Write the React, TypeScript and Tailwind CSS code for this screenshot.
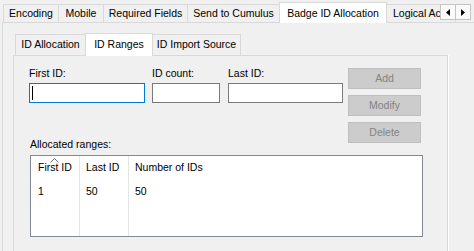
import type { ReactNode } from 'react';

// Windows-forms style "Badge ID Allocation" page, nested tab controls.

const outerTabs = [
  { label: 'Encoding', w: 'w-[56px]' },
  { label: 'Mobile', w: 'w-[46px]' },
  { label: 'Required Fields', w: 'w-[85px]' },
  { label: 'Send to Cumulus', w: 'w-[93px]' },
];

function Tab({ children, className }: { children: ReactNode; className: string }) {
  return (
    <div
      className={`-ml-px flex shrink-0 items-center justify-center whitespace-nowrap border border-b-0 border-[#d9d9d9] bg-[#f0f0f0] first:ml-0 ${className}`}
    >
      {children}
    </div>
  );
}

function SelectedTab({ children, className }: { children: ReactNode; className: string }) {
  return (
    <div
      className={`relative z-10 -mb-px -ml-px flex shrink-0 items-start justify-center whitespace-nowrap border border-b-0 border-[#d9d9d9] bg-white pt-[3px] ${className}`}
    >
      {children}
    </div>
  );
}

function Field({ label, width, focused }: { label: string; width: string; focused?: boolean }) {
  return (
    <div className={`flex shrink-0 flex-col ${width}`}>
      <div className="h-[14px] leading-[14px]">{label}</div>
      <div
        className={`mt-[3px] flex h-[20px] items-center bg-white pl-[2px] ${
          focused ? 'border border-[#0078d7]' : 'border border-[#7a7a7a]'
        }`}
      >
        {focused && <span className="h-[14px] w-px bg-black" />}
      </div>
    </div>
  );
}

function DisabledButton({ label }: { label: string }) {
  return (
    <div className="flex h-[21px] items-center justify-center border border-[#bfbfbf] bg-[#cccccc] text-[#838383]">
      {label}
    </div>
  );
}

export default function App() {
  return (
    <div
      className="relative h-[251px] w-[474px] overflow-hidden bg-[#f0f0f0] text-[10.5px] text-black"
      style={{ fontFamily: '"Liberation Sans", Arial, sans-serif' }}
    >
      {/* outer tab strip */}
      <div className="flex h-[22px] items-end pl-[3px]">
        {outerTabs.map((t) => (
          <Tab key={t.label} className={`h-[18px] ${t.w}`}>
            {t.label}
          </Tab>
        ))}
        <SelectedTab className="h-[21px] w-[108px]">Badge ID Allocation</SelectedTab>
        <Tab className="h-[18px] w-[70px] !justify-start pl-[6px]">Logical Access</Tab>
      </div>

      {/* tab scroll arrows */}
      <div className="absolute left-[440px] top-[4px] flex">
        <div className="flex h-[16px] w-[16px] items-center justify-center border border-[#c4c4c4] bg-[#fafafa]">
          <svg width="4" height="7" viewBox="0 0 4 7">
            <path d="M4 0 L0 3.5 L4 7 Z" fill="#000" />
          </svg>
        </div>
        <div className="-ml-px flex h-[16px] w-[16px] items-center justify-center border border-[#c4c4c4] bg-[#fafafa]">
          <svg width="4" height="7" viewBox="0 0 4 7">
            <path d="M0 0 L4 3.5 L0 7 Z" fill="#000" />
          </svg>
        </div>
      </div>

      {/* outer page */}
      <div className="ml-[2px] h-[240px] w-[490px] border-l border-t border-[#d9d9d9] pl-[10px] pt-[10px]">
        {/* inner tab strip */}
        <div className="flex h-[22px] items-end pl-[2px]">
          <Tab className="h-[21px] w-[71px]">ID Allocation</Tab>
          <SelectedTab className="h-[23px] w-[68px]">ID Ranges</SelectedTab>
          <Tab className="h-[21px] w-[89px]">ID Import Source</Tab>
        </div>

        {/* inner page */}
        <div className="h-[220px] w-[435px] border-l border-r border-t border-[#d9d9d9] pl-[15px] pt-[10px] shadow-[1px_0_0_#ffffff]">
          <div className="flex items-start">
            <div className="flex flex-col">
              <div className="flex items-start">
                <Field label="First ID:" width="w-[116px]" focused />
                <div className="ml-[7px]">
                  <Field label="ID count:" width="w-[68px]" />
                </div>
                <div className="ml-[8px]">
                  <Field label="Last ID:" width="w-[115px]" />
                </div>
              </div>
              <div className="mt-[34px] h-[14px] pl-px leading-[14px]">Allocated ranges:</div>
            </div>
            <div className="ml-[5px] flex w-[73px] flex-col gap-[6px] pt-[2px]">
              <DisabledButton label="Add" />
              <DisabledButton label="Modify" />
              <DisabledButton label="Delete" />
            </div>
          </div>

          {/* allocated ranges list */}
          <div className="ml-px mt-[4px] flex h-[82px] w-[393px] border border-[#828790] bg-white">
            <div className="relative w-[49px] border-r border-[#e5e5e5] pl-[7px]">
              <svg className="absolute left-[19px] top-[2px]" width="9" height="5" viewBox="0 0 9 5">
                <path d="M0.5 4.5 L4.5 0.5 L8.5 4.5" fill="none" stroke="#6d6d6d" strokeWidth="1" />
              </svg>
              <div className="h-[24px] pt-[4px] leading-[14px]">First ID</div>
              <div className="pt-[4px] leading-[14px]">1</div>
            </div>
            <div className="w-[49px] border-r border-[#e5e5e5] pl-[6px]">
              <div className="h-[24px] pt-[4px] leading-[14px]">Last ID</div>
              <div className="pt-[4px] leading-[14px]">50</div>
            </div>
            <div className="flex-1 pl-[6px]">
              <div className="h-[24px] pt-[4px] leading-[14px]">Number of IDs</div>
              <div className="pt-[4px] leading-[14px]">50</div>
            </div>
          </div>
        </div>
      </div>
    </div>
  );
}
